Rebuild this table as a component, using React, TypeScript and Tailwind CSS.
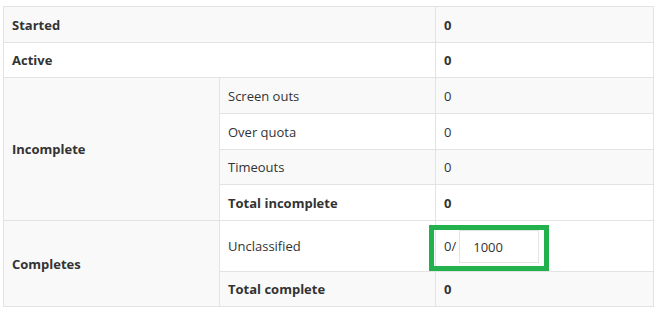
import React from "react";

const cell = "border border-[#e3e3e3] px-2 pt-[2px] align-middle";

export default function App() {
  return (
    <div className="w-[658px] h-[314px] bg-white pt-[6px] pl-[3px] font-['Open_Sans',sans-serif] text-[13px] text-[#333]">
      <table className="w-[650px] table-fixed border-collapse">
        <colgroup>
          <col className="w-[216px]" />
          <col className="w-[216px]" />
          <col className="w-[218px]" />
        </colgroup>
        <tbody>
          <tr className="h-[36px] bg-[#f9f9f9]">
            <td colSpan={2} className={`${cell} font-bold`}>Started</td>
            <td className={`${cell} font-bold`}>0</td>
          </tr>
          <tr className="h-[35px] bg-white">
            <td colSpan={2} className={`${cell} font-bold`}>Active</td>
            <td className={`${cell} font-bold`}>0</td>
          </tr>
          <tr className="h-[36px] bg-[#f9f9f9]">
            <td rowSpan={4} className={`${cell} font-bold`}>Incomplete</td>
            <td className={cell}>Screen outs</td>
            <td className={cell}>0</td>
          </tr>
          <tr className="h-[36px] bg-white">
            <td className={cell}>Over quota</td>
            <td className={cell}>0</td>
          </tr>
          <tr className="h-[35px] bg-[#f9f9f9]">
            <td className={cell}>Timeouts</td>
            <td className={cell}>0</td>
          </tr>
          <tr className="h-[36px] bg-white">
            <td className={`${cell} font-bold`}>Total incomplete</td>
            <td className={`${cell} font-bold`}>0</td>
          </tr>
          <tr className="h-[51px] bg-white">
            <td rowSpan={2} className={`${cell} font-bold bg-[#f9f9f9]`}>Completes</td>
            <td className={cell}>Unclassified</td>
            <td className="border border-[#e3e3e3] px-2 align-middle">
              <div className="relative flex items-center">
                <span className="pt-[2px]">0/</span>
                <input
                  readOnly
                  value="1000"
                  className="ml-[3px] w-[80px] h-[33px] border border-[#e3e3e3] bg-white px-[13px] pt-[2px] text-[13px] text-[#333] outline-none"
                />
                <div className="absolute left-[-15px] top-[-5px] w-[120px] h-[46px] border-[5px] border-[#22b14c] pointer-events-none" />
              </div>
            </td>
          </tr>
          <tr className="h-[35px] bg-[#f9f9f9]">
            <td className={`${cell} font-bold`}>Total complete</td>
            <td className={`${cell} font-bold`}>0</td>
          </tr>
        </tbody>
      </table>
    </div>
  );
}
